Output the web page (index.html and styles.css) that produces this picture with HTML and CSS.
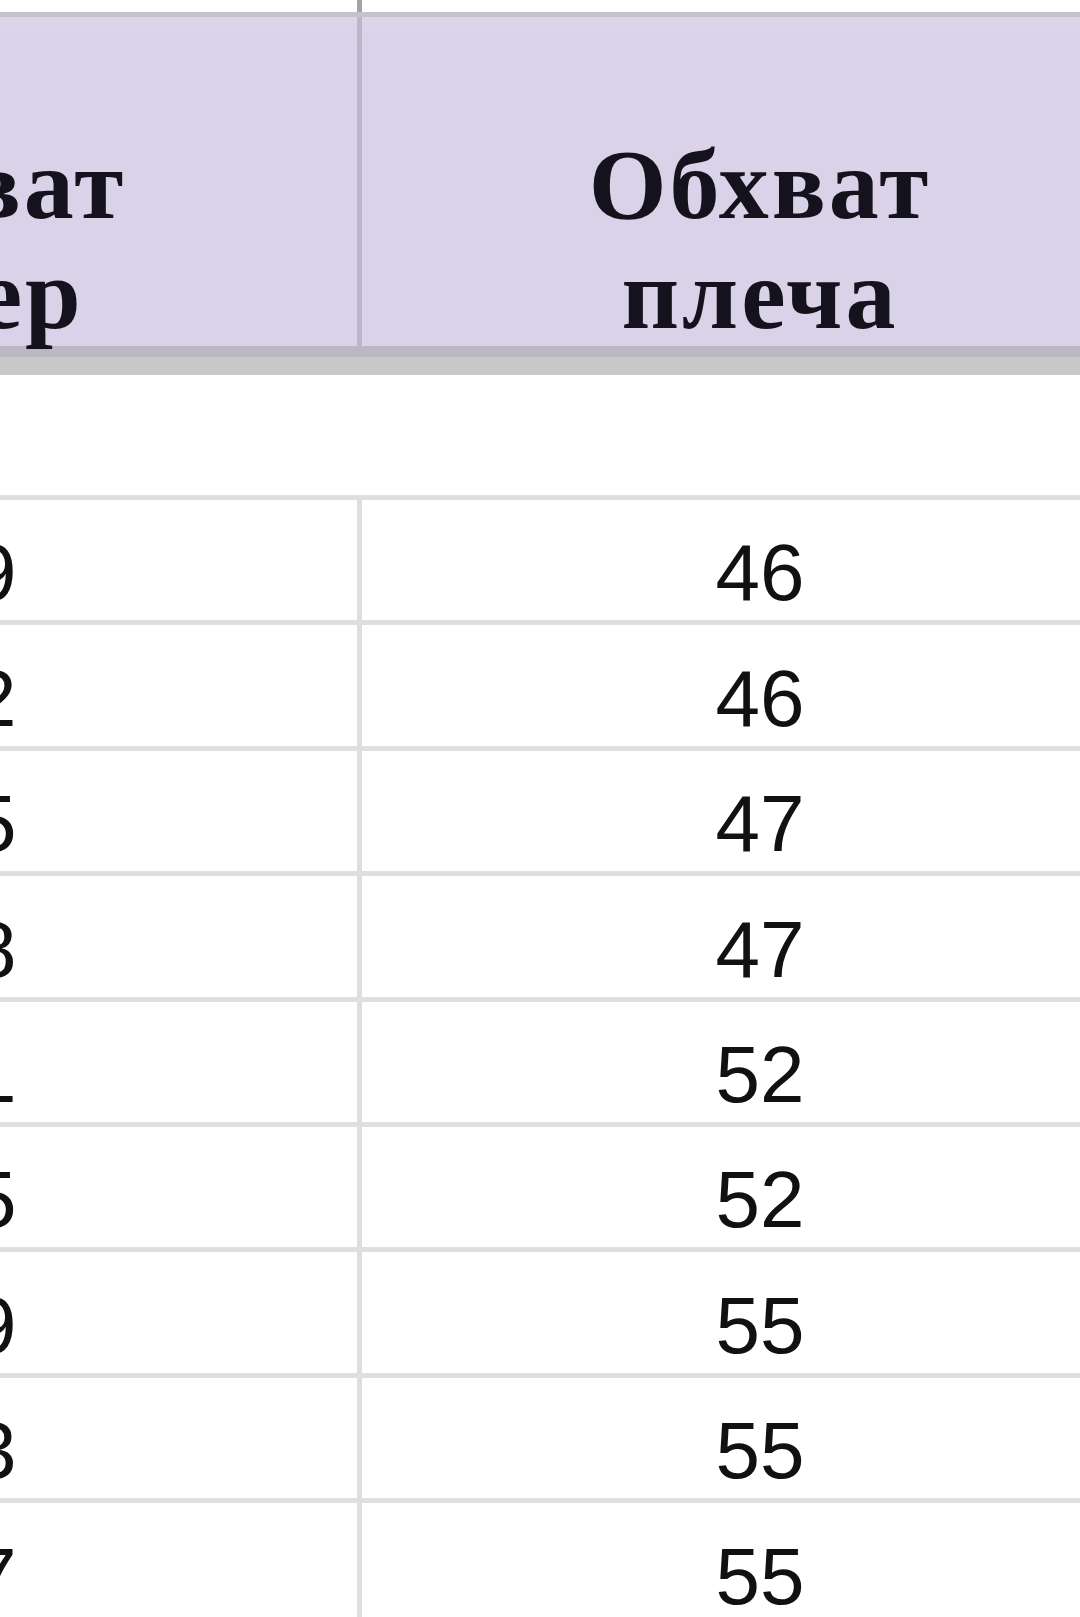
FILE: index.html
```html
<!DOCTYPE html>
<html lang="ru">
<head>
<meta charset="utf-8">
<title>Таблица размеров</title>
<link rel="stylesheet" href="styles.css">
</head>
<body>
<div class="sheet">
  <div class="row row-top">
    <div class="cell"></div>
    <div class="cell"></div>
  </div>
  <div class="row row-head">
    <div class="cell head head-left">Обхват<br>бедер</div>
    <div class="cell head">Обхват<br>плеча</div>
  </div>
  <div class="head-shadow"></div>
  <div class="row-blank"></div>
  <div class="row data"><div class="cell num left">69</div><div class="cell num">46</div></div>
  <div class="row data"><div class="cell num left">72</div><div class="cell num">46</div></div>
  <div class="row data"><div class="cell num left">75</div><div class="cell num">47</div></div>
  <div class="row data"><div class="cell num left">78</div><div class="cell num">47</div></div>
  <div class="row data"><div class="cell num left">81</div><div class="cell num">52</div></div>
  <div class="row data"><div class="cell num left">85</div><div class="cell num">52</div></div>
  <div class="row data"><div class="cell num left">89</div><div class="cell num">55</div></div>
  <div class="row data"><div class="cell num left">93</div><div class="cell num">55</div></div>
  <div class="row data"><div class="cell num left">97</div><div class="cell num">55</div></div>
</div>
</body>
</html>
```

FILE: styles.css
```css
html, body {
  margin: 0;
  padding: 0;
  background: #ffffff;
  overflow: hidden;
}

.sheet {
  width: 1597px;
  margin-left: -439px;
}

.row {
  display: grid;
  grid-template-columns: 801px 796px;
}

.cell {
  box-sizing: border-box;
}

.row > .cell:first-child {
  border-right: 5px solid #dedede;
}

/* partially visible row above the header */
.row-top {
  height: 17px;
  box-sizing: border-box;
  border-bottom: 5px solid #c4c2cb;
}

.row-top > .cell:first-child {
  border-right-color: #a4a3a8;
}

/* header */
.row-head {
  height: 329px;
  background: linear-gradient(#ddd6ea 0, #dad2e8 24px, #dad2e8 100%);
  border-bottom: 11px solid #bbb8c3;
  box-sizing: content-box;
}

.row-head > .cell:first-child {
  border-right-color: #bdb6cb;
}

.head {
  display: flex;
  flex-direction: column;
  justify-content: flex-end;
  align-items: center;
  text-align: center;
  margin-bottom: -4px;
  font-family: "Liberation Serif", "Times New Roman", serif;
  font-weight: bold;
  font-size: 100px;
  letter-spacing: 3px;
  line-height: 110px;
  color: #14121c;
}

.head-left {
  padding-right: 8px;
}

.head-shadow {
  height: 18px;
  background: #c8c8c8;
}

.row-blank {
  height: 120px;
}

/* data rows */
.data {
  height: 125.4px;
  box-sizing: border-box;
  border-top: 5px solid #dfdfdf;
}

.num {
  display: flex;
  align-items: flex-end;
  justify-content: center;
  padding-bottom: 7px;
  font-family: "Liberation Sans", Arial, sans-serif;
  font-size: 80px;
  line-height: 80px;
  color: #111111;
}

.num.left {
  padding-left: 26px;
}
```
